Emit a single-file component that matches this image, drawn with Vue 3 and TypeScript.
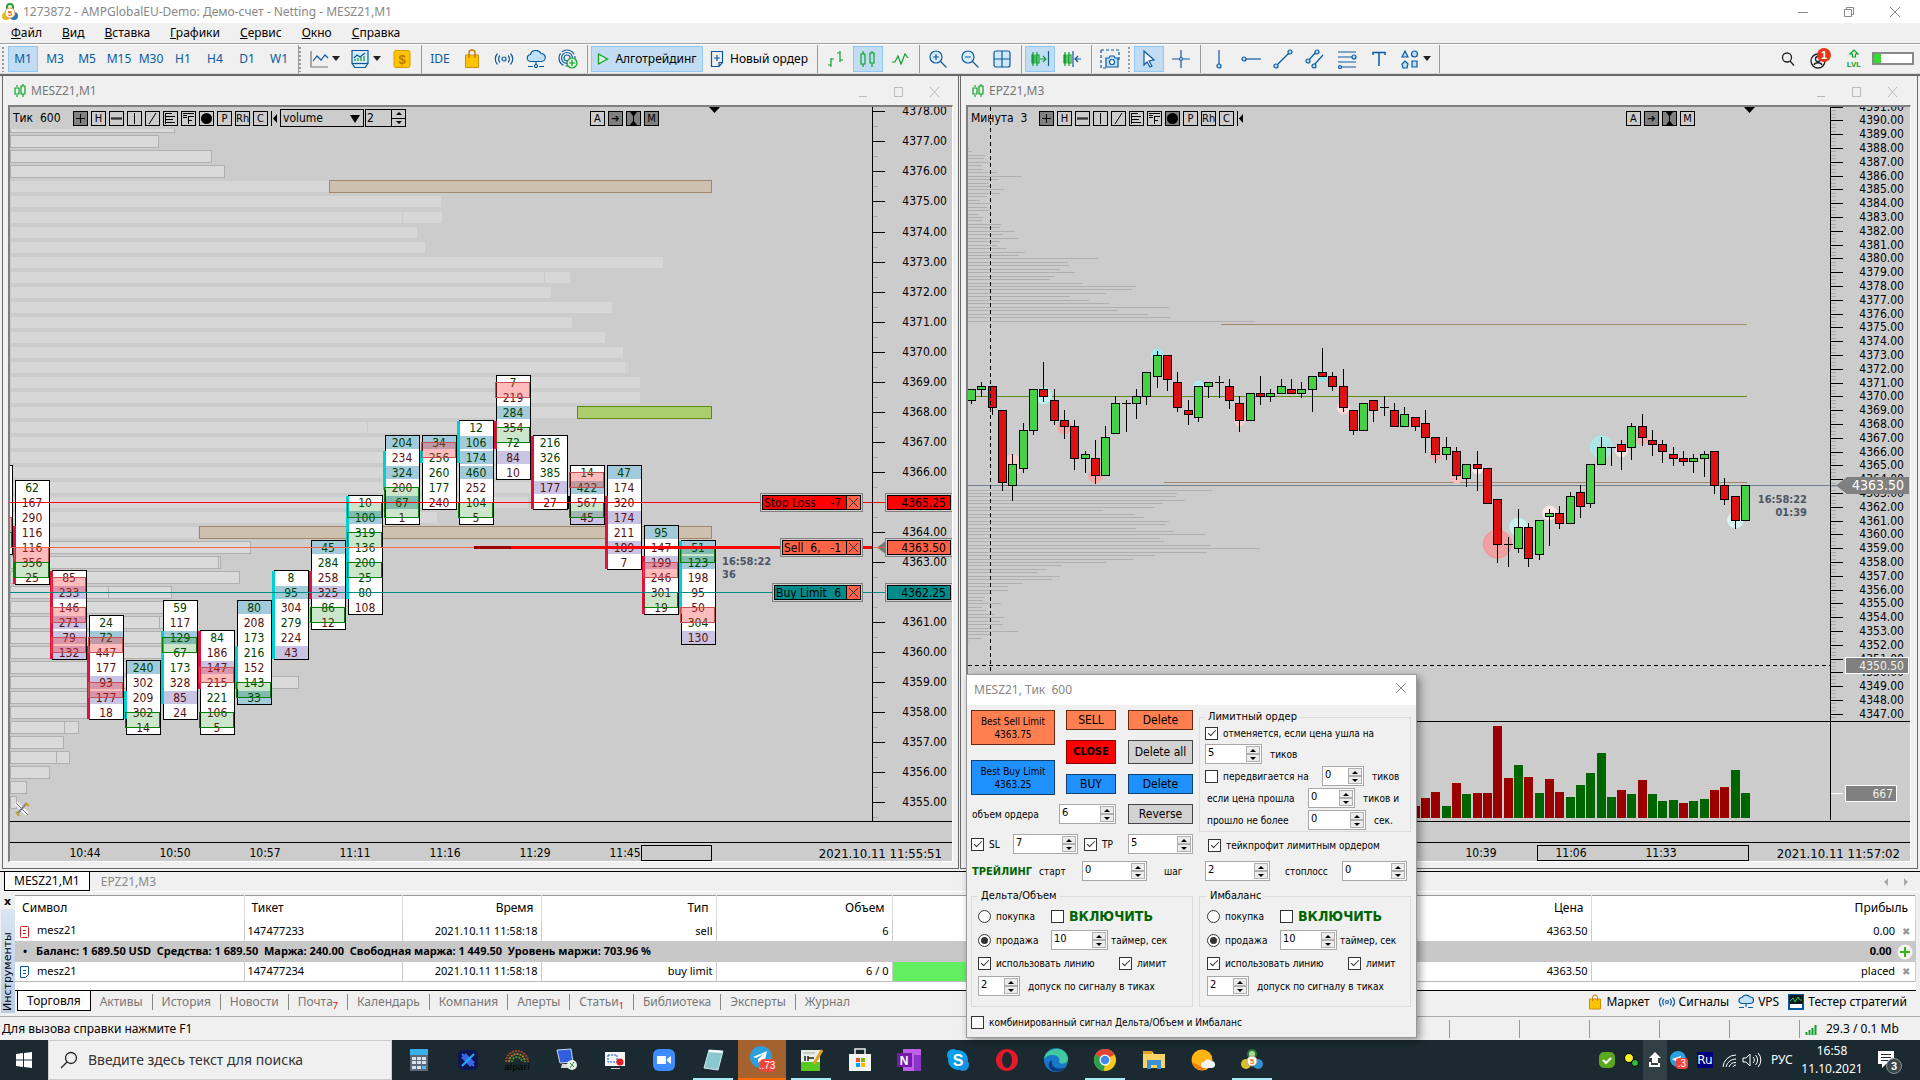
<script setup lang="ts">
import { h, ref } from 'vue'
import type { FunctionalComponent } from 'vue'

/* ---------- shared controls ---------- */
const Spin: FunctionalComponent<{ value: string; label: string }> = (props) =>
  h('span', { class: 'spin' }, [
    h('input', { type: 'text', value: props.value, 'aria-label': props.label }),
    h('span', { class: 'steps' }, [
      h('button', { type: 'button', 'aria-label': 'Больше' }, [h('i', { class: 'up' })]),
      h('button', { type: 'button', 'aria-label': 'Меньше' }, [h('i', { class: 'down' })]),
    ]),
  ])
Spin.props = ['value', 'label']

const menu = [
  ['Ф', 'айл'], ['В', 'ид'], ['В', 'ставка'], ['Г', 'рафики'], ['С', 'ервис'], ['О', 'кно'], ['С', 'правка'],
]
const frames = ['M1', 'M3', 'M5', 'M15', 'M30', 'H1', 'H4', 'D1', 'W1']
const tools = ['plus', 'H', 'minus', 'bar', 'slash', 'profile', 'fixed', 'dot', 'P', 'Rh', 'C', 'cut']
const glyphs: Record<string, string> = {
  plus: 'M6.500 2v9M2 6.500h9',
  minus: 'M1 6h11M1 7h11',
  bar: 'M6.500 1v11',
  slash: 'M3 12L10 1',
  profile: 'M1.500 1v11M1 1.500h7M1 4.500h10M1 7.500h8M1 10.500h10',
  fixed: 'M1 1.500h11M1 3.500h4M1 5.500h4M6.500 4v8M6 4.500h6M6 8.500h4',
}
const mode = ref('volume')

/* ---------- left chart: volume profile and clusters ---------- */
interface Bar { y: number; x2: number; div?: number }
const outlined: Bar[] = [
  { y: 120, x2: 175 }, { y: 135, x2: 159 }, { y: 150, x2: 212 }, { y: 165, x2: 225 },
  { y: 541, x2: 251 }, { y: 556, x2: 221, div: 218 }, { y: 571, x2: 240 }, { y: 586, x2: 172, div: 108 },
  { y: 601, x2: 166 }, { y: 616, x2: 166, div: 159 }, { y: 631, x2: 164 }, { y: 646, x2: 164 },
  { y: 661, x2: 128 }, { y: 676, x2: 299 }, { y: 691, x2: 128 }, { y: 706, x2: 91 },
  { y: 721, x2: 79, div: 64 }, { y: 736, x2: 64 }, { y: 751, x2: 70, div: 56 }, { y: 766, x2: 50 },
  { y: 781, x2: 27 }, { y: 796, x2: 17 },
]
const filled: Bar[] = [
  { y: 181, x2: 329 }, { y: 196, x2: 441 }, { y: 212, x2: 442, div: 402 }, { y: 227, x2: 417 },
  { y: 242, x2: 425 }, { y: 257, x2: 663 }, { y: 272, x2: 570, div: 544 }, { y: 287, x2: 551 },
  { y: 302, x2: 612 }, { y: 317, x2: 572 }, { y: 332, x2: 605 }, { y: 347, x2: 623 },
  { y: 362, x2: 628, div: 626 }, { y: 377, x2: 640 }, { y: 392, x2: 640 }, { y: 407, x2: 577 },
  { y: 422, x2: 496, div: 367 }, { y: 437, x2: 496 }, { y: 452, x2: 496 }, { y: 467, x2: 496 },
  { y: 482, x2: 533 }, { y: 497, x2: 528 }, { y: 512, x2: 437 }, { y: 527, x2: 198 },
]

/* cell: number, then g/r for the digit colour, then B/P for a shaded cell */
interface Cluster {
  x: number
  top: number
  cells: string
  bar?: [string, number, number]
  red?: number[]
  green?: number[]
}
const clusters: Cluster[] = [
  { x: -22, top: 465, cells: 'r r r r r r', red: [3], green: [4] },
  { x: 15, top: 480, cells: '62g 167r 290r 116r 116r 356r 25r', bar: ['sell', 526, 584], red: [4], green: [5] },
  { x: 52, top: 570, cells: '85r 233rP 146r 271rP 79rP 132rP', bar: ['sell', 571, 659], red: [0, 2, 4] },
  { x: 89, top: 615, cells: '24g 72gB 447r 177r 93rP 177rP 18r', bar: ['sell', 646, 719], red: [1, 4] },
  { x: 126, top: 660, cells: '240gB 302r 209r 302r 14r', bar: ['buy', 691, 719], green: [3] },
  { x: 163, top: 600, cells: '59g 117r 129gB 67g 173g 328r 85rP 24r', bar: ['buy', 631, 704], green: [2] },
  { x: 200, top: 630, cells: '84g 186r 147rP 215r 221g 106r 5r', bar: ['sell', 631, 689], red: [2], green: [5] },
  { x: 237, top: 600, cells: '80gB 208r 173g 216g 152r 143g 33gB', bar: ['buy', 646, 689], green: [5] },
  { x: 274, top: 570, cells: '8g 95gB 304r 279g 224r 43rP', bar: ['buy', 571, 659] },
  { x: 311, top: 540, cells: '45gB 284g 258r 325rP 86g 12r', bar: ['sell', 571, 599], green: [4] },
  { x: 348, top: 495, cells: '10g 100gB 319g 136g 200g 25g 80g 108r', bar: ['buy', 496, 599], green: [0, 2, 4] },
  { x: 385, top: 435, cells: '204gB 234r 324gB 200r 67gB 1r', bar: ['buy', 451, 490], green: [3, 4] },
  { x: 422, top: 435, cells: '34gB 256g 260g 177g 240r', bar: ['buy', 451, 463], red: [0] },
  { x: 459, top: 420, cells: '12g 106gB 174gB 460gB 252r 104g 5r', bar: ['buy', 421, 463], green: [5] },
  { x: 496, top: 375, cells: '7g 219r 284gB 354r 72g 84rP 10r', bar: ['sell', 421, 449], red: [0], green: [3] },
  { x: 533, top: 435, cells: '216g 326g 385g 177rP 27r', bar: ['sell', 436, 509] },
  { x: 570, top: 465, cells: '14g 422gB 567r 45rP', bar: ['flat', 496, 509], red: [0], green: [2] },
  { x: 607, top: 465, cells: '47gB 174r 320r 174rP 211r 189rP 7r', bar: ['sell', 496, 569] },
  { x: 644, top: 525, cells: '95gB 147r 199rP 246r 301r 19r', bar: ['sell', 556, 614], red: [2], green: [4] },
  { x: 681, top: 540, cells: '51gB 123gB 198r 95r 50r 304g 130rP', bar: ['buy', 541, 614], red: [4], green: [0] },
]
const parsed = clusters.map((c) => ({
  ...c,
  rows: c.cells.split(' ').map((s) => {
    const m = /^(\d*)([gr])([BP]?)$/.exec(s)!
    return { n: m[1], tone: m[2], bg: m[3] }
  }),
}))

const leftScale = Array.from({ length: 24 }, (_, i) => {
  const p = 4378 - i
  return { p: p.toFixed(2), y: 412 + (4368 - p) * 30 - (p >= 4375 ? 1 : 0) }
})
const leftTimes = ['10:44', '10:50', '10:57', '11:11', '11:16', '11:29', '11:45']

/* ---------- right chart ---------- */
const priceY = (p: number) => 120.4 + (4390 - p) * 13.8
const rightScale = Array.from({ length: 45 }, (_, i) => ({ p: (4391 - i).toFixed(2), y: Math.round(priceY(4391 - i)) }))
const rightMinor = Array.from({ length: 179 }, (_, i) => Math.round(priceY(4391 - i / 4)))

const upperProfile = [
  15, 20, 41, 39, 50, 36, 38, 62, 101, 64, 48, 50, 72, 66, 44, 33, 50, 44, 50, 30, 38, 36, 67, 66, 90, 70, 95, 65, 60,
  76, 106, 96, 225, 176, 178, 163, 188, 154, 147, 200, 287, 281, 238, 180, 211, 243, 341, 258, 307, 343, 481,
].map((w, i) => ({ y: Math.round(priceY(4388 - i / 4)), x2: Math.round(960 + w / 1.633) }))
const lowerProfile = [
  756, 651, 648, 675, 609, 582, 429, 525, 552, 627, 615, 528, 642, 738, 600, 612, 750, 900, 741, 585, 519, 438, 306,
  261, 231, 300, 276, 189, 144, 144, 96, 75, 69, 123, 66, 78, 102, 132, 120, 129, 90, 174, 87, 66, 27,
].map((w, i) => ({ y: Math.round(priceY(4363.25 - i / 4)), x2: Math.round(960 + w / 3) }))
const profile = [...upperProfile, ...lowerProfile]

/* high, body top, body bottom, low, direction */
type Candle = [number, number, number, number, string]
const candles: Candle[] = [
  [389, 389, 400, 403, 'g'], [382, 386, 389, 396, 'g'], [386, 386, 407, 414, 'r'], [410, 410, 482, 490, 'r'],
  [454, 464, 485, 500, 'g'], [423, 430, 468, 472, 'g'], [389, 389, 430, 434, 'g'], [362, 389, 396, 401, 'r'],
  [389, 400, 420, 424, 'r'], [410, 420, 426, 438, 'r'], [420, 426, 458, 469, 'r'], [451, 454, 458, 472, 'g'],
  [440, 458, 475, 483, 'r'], [426, 437, 475, 475, 'g'], [396, 403, 433, 433, 'g'], [400, 403, 403, 431, 'd'],
  [389, 396, 403, 418, 'g'], [372, 372, 396, 404, 'g'], [351, 355, 376, 387, 'g'], [355, 355, 379, 390, 'r'],
  [372, 382, 407, 411, 'r'], [400, 410, 414, 424, 'r'], [386, 386, 417, 421, 'g'], [382, 382, 386, 397, 'g'],
  [376, 382, 382, 397, 'd'], [379, 386, 400, 408, 'r'], [396, 403, 420, 431, 'r'], [393, 393, 420, 420, 'g'],
  [376, 393, 396, 404, 'r'], [389, 393, 396, 401, 'g'], [379, 386, 393, 393, 'g'], [379, 389, 393, 393, 'r'],
  [382, 389, 393, 397, 'g'], [376, 376, 389, 411, 'g'], [348, 372, 376, 376, 'r'], [372, 376, 386, 390, 'r'],
  [369, 386, 407, 411, 'r'], [410, 410, 430, 434, 'r'], [403, 403, 430, 430, 'g'], [400, 400, 410, 421, 'r'],
  [396, 407, 407, 415, 'd'], [403, 410, 426, 426, 'r'], [407, 414, 426, 426, 'g'], [417, 417, 426, 430, 'r'],
  [410, 423, 437, 452, 'r'], [437, 437, 454, 462, 'r'], [437, 447, 454, 459, 'g'], [447, 451, 475, 479, 'r'],
  [464, 464, 478, 486, 'g'], [451, 464, 468, 490, 'r'], [468, 468, 503, 503, 'r'], [499, 499, 544, 562, 'r'],
  [537, 544, 544, 566, 'd'], [509, 527, 548, 552, 'g'], [523, 527, 558, 566, 'r'], [520, 520, 554, 559, 'g'],
  [509, 513, 516, 545, 'g'], [506, 513, 523, 528, 'r'], [492, 496, 523, 523, 'g'], [485, 492, 506, 517, 'r'],
  [464, 464, 503, 507, 'g'], [437, 447, 464, 464, 'g'], [447, 447, 447, 465, 'd'], [440, 444, 451, 469, 'r'],
  [423, 426, 447, 459, 'g'], [414, 426, 437, 445, 'r'], [430, 440, 444, 455, 'r'], [440, 444, 451, 462, 'r'],
  [447, 454, 458, 465, 'r'], [451, 458, 461, 465, 'r'], [454, 458, 461, 472, 'g'], [451, 454, 458, 476, 'g'],
  [451, 451, 485, 493, 'r'], [478, 485, 499, 504, 'r'], [496, 496, 520, 528, 'r'], [485, 485, 520, 520, 'g'],
]
const candleX = (i: number) => Math.round(971 + i * 10.32)

/* centre, radius, fill, rim */
const bubbles: [number, number, number, string, string][] = [
  [1043, 396, 8, '#c8f0f0', '#b4f4f4'], [1012, 465, 10, '#f8cccc', '#f8cccc'], [1064, 427, 7, '#f6a5a5', '#f6a5a5'],
  [1095, 476, 7, '#f8a8a8', '#f8a8a8'], [1157, 355, 6, '#a0e8ec', '#94f8f8'], [1198, 386, 5, '#b4ecee', '#a8f8f8'],
  [1239, 421, 5, '#fbd0d0', '#fbd0d0'], [1322, 376, 5, '#94e0e6', '#90f0f4'], [1343, 408, 6, '#fad8d8', '#fad8d8'],
  [1435, 455, 5, '#f8a8a8', '#f8a8a8'], [1456, 476, 7, '#fac0c0', '#fac0c0'], [1477, 469, 5, '#fdecec', '#fdecec'],
  [1497, 544, 14, '#efa0a0', '#fa8c8c'], [1518, 527, 9, '#cdf0f0', '#b4f4f4'], [1549, 513, 7, '#fbe4e4', '#fbe4e4'],
  [1601, 447, 11, '#b0e4e4', '#98f8f8'], [1621, 451, 6, '#fde8e8', '#fde8e8'], [1642, 438, 6, '#f8b0b0', '#f8b0b0'],
  [1735, 520, 8, '#daf2f2', '#c8f8f8'],
]

const volHeights = [
  12, 20, 26, 12, 35, 24, 25, 25, 92, 40, 53, 41, 25, 39, 26, 21, 33, 45, 65, 21, 28, 24, 38, 24, 17, 18, 15, 17, 19,
  28, 31, 48, 25,
]
const volTones = 'rrrgrgrrrrgrgrrgggggrgrgggrggrrgg'
const volumes = volHeights.map((v, i) => ({ x: candleX(43 + i) - 4, v, tone: volTones[i] }))

/* ---------- toolbox ---------- */
const tabs = [
  ['Торговля', ''], ['Активы', ''], ['История', ''], ['Новости', ''], ['Почта', '7'], ['Календарь', ''],
  ['Компания', ''], ['Алерты', ''], ['Статьи', '1'], ['Библиотека', ''], ['Эксперты', ''], ['Журнал', ''],
]
const signalGroups = [
  { id: 'delta', title: 'Дельта/Объем' },
  { id: 'imb', title: 'Имбаланс' },
]
</script>

<template>
  <div class="app">
    <header class="titlebar">
      <svg class="logo" width="16" height="18" viewBox="0 0 16 18">
        <circle cx="8" cy="4" r="3" fill="#fff" stroke="#2f9a2f" stroke-width="2" />
        <circle cx="4" cy="13" r="4" fill="#e8b820" /><circle cx="12" cy="13" r="4" fill="#2878c0" />
        <circle cx="8" cy="10" r="5" fill="#fff" stroke="#d8a060" />
        <text x="8" y="13" text-anchor="middle" class="coin">5</text>
      </svg>
      <h1>1273872 - AMPGlobalEU-Demo: Демо-счет - Netting - MESZ21,M1</h1>
      <div class="winbtns">
        <button aria-label="Свернуть"><svg width="12" height="12"><path d="M1 6.500h10" class="wl" /></svg></button>
        <button aria-label="Восстановить"><svg width="12" height="12"><path d="M1.500 3.500h7v7h-7zM3.500 3V1.500h7v7H9" class="wl" /></svg></button>
        <button aria-label="Закрыть"><svg width="12" height="12"><path d="M1 1l10 10M11 1L1 11" class="wl" /></svg></button>
      </div>
    </header>

    <nav class="menubar">
      <a v-for="(m, i) in menu" :key="i" href="#"><u>{{ m[0] }}</u>{{ m[1] }}</a>
    </nav>

    <div class="toolbar">
      <i class="grip"></i>
      <button v-for="f in frames" :key="f" class="tb" :class="{ on: f === 'M1' }">{{ f }}</button>
      <i class="sep"></i><i class="grip"></i>
      <button class="tb drop" aria-label="Линия">
        <svg width="20" height="20" class="b"><path d="M2 2v16h17" class="gr" /><path d="M4 12l4-5 4 4 4-5 3 3" /></svg><i class="caret"></i>
      </button>
      <button class="tb drop" aria-label="Шаблон">
        <svg width="20" height="20" class="b"><path d="M2 1.500h16v13l-3 4H5l-3-4z" fill="#d8ecfa" /><path d="M4 9l3-3 3 2 5-4" /><path d="M5 12v-2M8 12V9M11 12V8M14 12V7" stroke="#12a02a" /><path d="M2 14.500h16" /></svg><i class="caret"></i>
      </button>
      <button class="tb" aria-label="Счет">
        <svg width="18" height="20"><rect x="1" y="1.500" width="16" height="17" rx="2" fill="#ffc400" stroke="#d89b00" /><text x="9" y="15" text-anchor="middle" class="dollar">$</text></svg>
      </button>
      <i class="sep"></i>
      <button class="tb">IDE</button>
      <button class="tb" aria-label="Маркет">
        <svg width="16" height="20"><path d="M1.500 6h13v12.500h-13z" fill="#ffc400" stroke="#c89010" /><path d="M5 9V4a3 3 0 0 1 6 0v5" fill="none" stroke="#c07a00" stroke-width="1.400" /></svg>
      </button>
      <button class="tb" aria-label="Сигналы">
        <svg width="20" height="16" class="b"><circle cx="10" cy="8" r="2" /><path d="M6 4.500a5 5 0 0 0 0 7M14 4.500a5 5 0 0 1 0 7M3.500 2.500a8 8 0 0 0 0 11M16.500 2.500a8 8 0 0 1 0 11" /></svg>
      </button>
      <button class="tb" aria-label="VPS">
        <svg width="20" height="18" class="b"><path d="M5 11.500a3.500 3.500 0 0 1-.5-7 5.500 5 0 0 1 10.500-1 4 4 0 0 1 .5 8z" fill="#bfe2f8" /><path d="M10 12v3M2 16.500h5M13 16.500h5" /><circle cx="10" cy="16" r="1.500" /></svg>
      </button>
      <button class="tb" aria-label="Сообщество">
        <svg width="20" height="20" class="b"><circle cx="9" cy="9" r="8" stroke-dasharray="14 2" /><circle cx="9" cy="9" r="5.500" /><circle cx="9" cy="9" r="3" /><circle cx="14" cy="14" r="5" fill="#d8f5d8" stroke="#12a02a" /><path d="M14 11v6M11 14h6" stroke="#12a02a" /></svg>
      </button>
      <i class="sep"></i>
      <button class="tb wide on"><svg width="12" height="14"><path d="M1.500 2l9 5-9 5z" fill="#d9f5dc" stroke="#0da326" stroke-width="1.300" /></svg>Алготрейдинг</button>
      <button class="tb wide"><svg width="14" height="18" class="b"><path d="M1.500 1.500h11v11l-3.500 4H1.500zM12 12.500H9V16" /><path d="M7 5v6M4 8h6" /></svg>Новый ордер</button>
      <i class="sep"></i>
      <button class="tb" aria-label="Бары"><svg width="20" height="20" class="g"><path d="M5 9v9M2 16h3M5 10h3M14 2v11M11 4h3M14 11h3" /></svg></button>
      <button class="tb on" aria-label="Свечи"><svg width="20" height="20" class="g"><path d="M5 2v3M5 15v3M3 5h4v10H3zM14 2v2M14 14v4M12 4h4v10h-4z" /></svg></button>
      <button class="tb" aria-label="Линия"><svg width="20" height="20" class="g"><path d="M2 13h3l3-6 3 8 4-10 3 4" /></svg></button>
      <i class="sep"></i>
      <button class="tb" aria-label="Крупнее"><svg width="20" height="20" class="b"><circle cx="8" cy="8" r="6" fill="#d8ecfa" /><path d="M8 5v6M5 8h6M12.500 12.500l6 6" /></svg></button>
      <button class="tb" aria-label="Мельче"><svg width="20" height="20" class="b"><circle cx="8" cy="8" r="6" fill="#d8ecfa" /><path d="M5 8h6M12.500 12.500l6 6" /></svg></button>
      <button class="tb" aria-label="Окна"><svg width="20" height="20" class="b"><rect x="2" y="2" width="16" height="16" rx="2" fill="#cfe8fa" /><path d="M10 2v16M2 10h16" /></svg></button>
      <i class="sep"></i>
      <button class="tb on" aria-label="Автопрокрутка"><svg width="20" height="20" class="g"><path d="M3 3v14M7 3v14M2 6h2v8H2zM6 6h3v8H6zM10 10h6M13 7l3 3-3 3" /><path d="M18.500 2v15" stroke="#0a5a8a" /></svg></button>
      <button class="tb" aria-label="Сдвиг"><svg width="20" height="20" class="g"><path d="M3 3v14M7 3v14M2 6h2v8H2zM6 6h3v8H6z" /><path d="M11 2v16M19 10h-6M16 7l-3 3 3 3" stroke="#0a5aa0" /></svg></button>
      <i class="sep"></i>
      <button class="tb" aria-label="Снимок"><svg width="20" height="20" class="b"><path d="M1 1h18v10M1 1v18h5" stroke-dasharray="3 2" /><path d="M6 9h3l1-2h4l1 2h3v9H6z" fill="#bfe0f8" /><circle cx="12" cy="13" r="2.500" fill="#fff" /></svg></button>
      <i class="grip"></i>
      <button class="tb on" aria-label="Курсор"><svg width="20" height="20" class="b"><path d="M5 2l10 9-5 1 3 5-2 1-3-5-3 3z" fill="#fff" /></svg></button>
      <button class="tb" aria-label="Перекрестие"><svg width="20" height="20" class="b"><path d="M10 1v7M10 12v7M1 10h7M12 10h7" /><circle cx="10" cy="10" r="1.500" /></svg></button>
      <i class="sep"></i>
      <button class="tb" aria-label="Вертикаль"><svg width="20" height="20" class="b"><path d="M10 1v14" /><circle cx="10" cy="17" r="2" fill="#bfe0f8" /></svg></button>
      <button class="tb" aria-label="Горизонталь"><svg width="20" height="20" class="b"><path d="M5 10h15" /><circle cx="3" cy="10" r="2" fill="#bfe0f8" /></svg></button>
      <button class="tb" aria-label="Тренд"><svg width="20" height="20" class="b"><path d="M4 16L16 4" /><circle cx="3" cy="17" r="2" fill="#bfe0f8" /><circle cx="17" cy="3" r="2" fill="#bfe0f8" /></svg></button>
      <button class="tb" aria-label="Канал"><svg width="20" height="20" class="b"><path d="M3 12L11 3M9 16L18 6" /><circle cx="3" cy="12" r="2" fill="#bfe0f8" /><circle cx="12" cy="3" r="2" fill="#bfe0f8" /><circle cx="9" cy="17" r="2" fill="#bfe0f8" /></svg></button>
      <button class="tb" aria-label="Фибоначчи"><svg width="20" height="20" class="b"><path d="M1 3h18M1 8h15M1 13h18M5 18h14" /><circle cx="17" cy="8" r="2" fill="#bfe0f8" /><circle cx="3" cy="18" r="1.500" fill="#bfe0f8" /></svg></button>
      <button class="tb" aria-label="Текст"><svg width="16" height="18" class="b"><path d="M2 5V2.500h12V5M8 3v13" stroke-width="1.500" /></svg></button>
      <button class="tb drop" aria-label="Фигуры"><svg width="20" height="20" class="b"><path d="M5 2l3 6H2zM5 12l3 3-1 4H3l-1-4zM12 12h5v6h-5z" fill="#bfe0f8" /><circle cx="14.500" cy="5" r="3" fill="#bfe0f8" /></svg><i class="caret"></i></button>
      <i class="sep"></i>
      <div class="tbright">
        <svg width="16" height="16"><circle cx="7" cy="6.500" r="4.500" class="k" /><path d="M10 10l4 4.500" class="k" /></svg>
        <svg width="22" height="24" viewBox="0 0 22 24"><circle cx="8" cy="14" r="7" class="k" /><circle cx="8" cy="12" r="2.500" class="k" /><path d="M4 18c1-3 7-3 8 0" class="k" /><circle cx="14" cy="8" r="7" fill="#e0381c" /><text x="14" y="12" text-anchor="middle" class="badge">1</text></svg>
        <svg width="16" height="20" class="g"><path d="M8 1L4 5h2.500v3h3V5H12z" /><text x="8" y="18" text-anchor="middle" class="lvl">LVL</text></svg>
        <span class="meter"><i></i></span>
      </div>
    </div>

    <main class="mdi">
      <!-- left chart -->
      <section class="win first">
        <div class="wintitle">
          <svg width="14" height="14" class="g"><path d="M4 1v2M4 11v2M2 4h4v6H2zM10 0v2M10 10v3M8 2h4v8H8z" /></svg>
          <h2>MESZ21,M1</h2>
          <span class="cbtns">
            <button aria-label="Свернуть"><svg width="12" height="12"><path d="M2 10.500h8" class="cl" /></svg></button>
            <button aria-label="Развернуть"><svg width="12" height="12"><path d="M1.500 1.500h8v9h-8z" class="cl" /></svg></button>
            <button aria-label="Закрыть"><svg width="12" height="12"><path d="M1 1l9 10M10 1L1 11" class="cl" /></svg></button>
          </span>
        </div>
        <div class="chart">
          <div class="pane">
            <svg class="plot" aria-label="MESZ21">
              <g transform="translate(-10,-107)">
                <template v-for="b in outlined" :key="'o' + b.y">
                  <rect x="10.500" :y="b.y + 0.5" :width="b.x2 - 11" height="12" class="hb" />
                  <path v-if="b.div" :d="`M${b.div + 0.5} ${b.y + 1}v11`" class="hbd" />
                </template>
                <template v-for="b in filled" :key="'f' + b.y">
                  <rect x="11" :y="b.y" :width="b.x2 - 11" height="11" fill="#d7d7d7" />
                  <path v-if="b.div" :d="`M${b.div + 0.5} ${b.y}v11`" stroke="#cbcbcb" />
                </template>
                <rect x="10" y="107" width="400" height="22" fill="#ccc" />
                <rect x="329.500" y="180.500" width="382" height="12" class="tan" />
                <rect x="199.500" y="526.500" width="512" height="12" class="tan" />
                <rect x="577.500" y="406.500" width="134" height="12" fill="#adce6c" stroke="#5a8c14" />
                <g v-for="c in parsed" :key="c.x">
                  <rect :x="c.x + 0.5" :y="c.top + 0.5" width="34" :height="c.rows.length * 15 - 1" fill="#fff" stroke="#000" />
                  <rect v-for="(r, i) in c.rows" v-show="r.bg" :key="i" :x="c.x + 1" :y="c.top + 1 + i * 15" width="33" height="13" :fill="r.bg === 'B' ? '#a2cadb' : '#c9c4e4'" />
                  <rect v-if="c.bar" :x="c.x - 2" :y="c.bar[1]" width="3" :height="c.bar[2] - c.bar[1]" :class="'side-' + c.bar[0]" />
                  <text v-for="(r, i) in c.rows" :key="'t' + i" :x="c.x + 17" :y="c.top + 12 + i * 15" text-anchor="middle" :class="'n-' + r.tone">{{ r.n }}</text>
                  <rect v-for="i in c.red" :key="'r' + i" :x="c.x - 0.5" :y="c.top + 7.5 + i * 15" width="34" height="15" class="imb-r" />
                  <rect v-for="i in c.green" :key="'g' + i" :x="c.x - 0.5" :y="c.top + 7.5 + i * 15" width="34" height="15" class="imb-g" />
                </g>
                <path d="M10 502.500H900" stroke="#f00" />
                <path d="M10 547.500H900" stroke="#ff6347" />
                <path d="M511 547.500H872" stroke="#f00" stroke-width="3" />
                <path d="M474 547.500h37" stroke="#a00000" stroke-width="3" />
                <path d="M10 592.500H900" stroke="#008b8b" />
                <path d="M709 107h11l-5.500 6z" />
                <text x="722" y="565" class="clock">16:58:22</text>
                <text x="722" y="578" class="clock">36</text>
                <g class="order">
                  <rect x="760.500" y="493.500" width="102" height="18" class="rim" /><rect x="762.500" y="495.500" width="98" height="14" fill="#f00" /><rect x="846.500" y="495.500" width="14" height="14" fill="#ff6347" /><path d="M849 498l9 9M858 498l-9 9" stroke="#333" /><text x="764" y="507">Stop Loss</text><text x="841" y="507" text-anchor="end">-7</text>
                  <rect x="780.500" y="538.500" width="82" height="18" class="rim" /><rect x="782.500" y="540.500" width="78" height="14" fill="#ff6347" /><rect x="846.500" y="540.500" width="14" height="14" fill="#ff6347" /><path d="M849 543l9 9M858 543l-9 9" stroke="#333" /><text x="784" y="552">Sell&nbsp; 6,</text><text x="841" y="552" text-anchor="end">-1</text>
                  <rect x="772.500" y="583.500" width="90" height="18" class="rim" /><rect x="774.500" y="585.500" width="86" height="14" fill="#008b8b" /><rect x="846.500" y="585.500" width="14" height="14" fill="#ff6347" /><path d="M849 588l9 9M858 588l-9 9" stroke="#333" /><text x="776" y="597">Buy Limit</text><text x="841" y="597" text-anchor="end">6</text>
                </g>
                <g transform="translate(14,801)" fill="none" stroke-width="2"><path d="M2 2l11 11" stroke="#f8f8f8" stroke-width="4" /><path d="M2 2l12 12" stroke="#666" stroke-width="1" /><path d="M13 2L3 13" stroke="#888" /><path d="M11 2l4 3M2 11l3 4" stroke="#c8a020" /></g>
              </g>
            </svg>
            <svg class="axis" width="80">
              <g transform="translate(-872,-107)">
                <path d="M872.500 107v715" stroke="#000" />
                <template v-for="s in leftScale" :key="s.p">
                  <path :d="`M873 ${s.y + 0.5}h12`" stroke="#000" /><path :d="`M873 ${s.y + 15.5}h5`" stroke="#aaa" />
                  <text v-if="s.p !== '4365.00' && s.p !== '4362.00'" x="947" :y="s.y + 4" text-anchor="end">{{ s.p }}</text>
                </template>
                <path d="M873 502.500h12" stroke="#f00" /><path d="M873 592.500h12" stroke="#008b8b" />
                <path d="M877 547.500l8-6v12z" fill="#777" /><path d="M873 547.500h12" stroke="#ff6347" />
                <g class="order">
                  <rect x="885.500" y="493.500" width="68" height="18" class="rim" /><rect x="887.500" y="495.500" width="63" height="14" fill="#f00" /><text x="946" y="507" text-anchor="end">4365.25</text>
                  <rect x="885.500" y="538.500" width="68" height="18" class="rim" /><rect x="887.500" y="540.500" width="63" height="14" fill="#ff6347" /><text x="946" y="552" text-anchor="end">4363.50</text>
                  <rect x="885.500" y="583.500" width="68" height="18" class="rim" /><rect x="887.500" y="585.500" width="63" height="14" fill="#008b8b" /><text x="946" y="597" text-anchor="end">4362.25</text>
                </g>
              </g>
            </svg>
            <div class="ctools">
              <span class="period p1">Тик&nbsp; 600</span>
              <button v-for="t in tools" :key="t" :class="{ dark: t === 'plus', cut: t === 'cut' }" :aria-label="t">
                <svg v-if="glyphs[t]" width="13" height="13"><path :d="glyphs[t]" class="tg" /></svg>
                <svg v-else-if="t === 'dot'" width="13" height="13"><circle cx="6.500" cy="6.500" r="5.500" /></svg>
                <svg v-else-if="t === 'cut'" width="5" height="13"><path d="M5 2L1 6.500 5 11z" /></svg>
                <template v-else>{{ t }}</template>
              </button>
              <span class="sel"><select v-model="mode" aria-label="Тип"><option>volume</option></select></span>
              <Spin class="cspin" value="2" label="Порог" />
            </div>
            <div class="ctools r1">
              <button>A</button><button class="dark">➔</button><button class="dark"><svg width="13" height="13"><path d="M3 0h7L7 4v5l3 4H3l3-4V4z" /></svg></button><button class="dark">M</button>
            </div>
          </div>
          <div class="strip"></div>
          <div class="times">
            <ol class="t1"><li v-for="t in leftTimes" :key="t">{{ t }}</li></ol>
            <i class="range rg1"></i>
            <time>2021.10.11 11:55:51</time>
          </div>
        </div>
      </section>

      <!-- right chart -->
      <section class="win second">
        <div class="wintitle">
          <svg width="14" height="14" class="g"><path d="M4 1v2M4 11v2M2 4h4v6H2zM10 0v2M10 10v3M8 2h4v8H8z" /></svg>
          <h2>EPZ21,M3</h2>
          <span class="cbtns">
            <button aria-label="Свернуть"><svg width="12" height="12"><path d="M2 10.500h8" class="cl" /></svg></button>
            <button aria-label="Развернуть"><svg width="12" height="12"><path d="M1.500 1.500h8v9h-8z" class="cl" /></svg></button>
            <button aria-label="Закрыть"><svg width="12" height="12"><path d="M1 1l9 10M10 1L1 11" class="cl" /></svg></button>
          </span>
        </div>
        <div class="chart">
          <div class="pane">
            <svg class="plot" aria-label="EPZ21">
              <g transform="translate(-968,-107)">
                <path v-for="(p, i) in profile" :key="i" :d="`M968 ${p.y + 0.5}H${p.x2}`" stroke="#b0b0b0" />
                <path d="M1221 324.500H1747" stroke="#a08868" /><path d="M1164 482.500H1747" stroke="#a08868" />
                <path d="M968 396.500H1747" stroke="#5a8c14" /><path d="M968 485.500H1900" stroke="#708090" />
                <circle v-for="(b, i) in bubbles" :key="'b' + i" :cx="b[0] + 0.5" :cy="b[1]" :r="b[2]" :fill="b[3]" :stroke="b[4]" />
                <g v-for="(c, i) in candles" :key="'c' + i">
                  <path :d="`M${candleX(i) + 0.5} ${c[0]}V${c[3] + 1}`" stroke="#000" />
                  <path v-if="c[4] === 'd'" :d="`M${candleX(i) - 4} ${c[1] + 0.5}h9`" stroke="#000" />
                  <rect v-else :x="candleX(i) - 3.5" :y="c[1] + 0.5" width="8" :height="c[2] - c[1]" :fill="c[4] === 'g' ? '#46d246' : '#dc1212'" stroke="#000" />
                </g>
                <path d="M990.500 107V740" stroke="#000" stroke-dasharray="4 3" /><path d="M968 665.500H1900" stroke="#000" stroke-dasharray="4 3" />
                <path d="M1744 107h11l-5.500 6z" />
                <text x="1807" y="503" text-anchor="end" class="clock">16:58:22</text>
                <text x="1807" y="516" text-anchor="end" class="clock">01:39</text>
              </g>
            </svg>
            <svg class="axis" width="80">
              <g transform="translate(-1830,-107)">
                <path v-for="(y, i) in rightMinor" :key="i" :d="`M1831 ${y + 0.5}h5`" stroke="#aaa" />
                <path d="M1830.500 107v715" stroke="#000" />
                <template v-for="s in rightScale" :key="s.p">
                  <path :d="`M1831 ${s.y + 0.5}h12`" stroke="#000" />
                  <text x="1904" :y="s.y + 4" text-anchor="end">{{ s.p }}</text>
                </template>
                <path d="M1831 485.500h8" stroke="#708090" />
                <path d="M1836 485.500l11-8.500h62v17h-62z" fill="#808080" /><text x="1904" y="490" text-anchor="end" class="now">4363.50</text>
                <rect x="1845.500" y="657.500" width="63" height="16" fill="#808080" stroke="#fff" /><text x="1904" y="670" text-anchor="end" class="cross">4350.50</text>
              </g>
            </svg>
            <div class="ctools">
              <span class="period p2">Минута&nbsp; 3</span>
              <button v-for="t in tools" :key="t" :class="{ dark: t === 'plus' || t === 'dot', cut: t === 'cut' }" :aria-label="t">
                <svg v-if="glyphs[t]" width="13" height="13"><path :d="glyphs[t]" class="tg" /></svg>
                <svg v-else-if="t === 'dot'" width="13" height="13"><circle cx="6.500" cy="6.500" r="5.500" /></svg>
                <svg v-else-if="t === 'cut'" width="5" height="13"><path d="M5 2L1 6.500 5 11z" /></svg>
                <template v-else>{{ t }}</template>
              </button>
            </div>
            <div class="ctools r2">
              <button>A</button><button class="dark">➔</button><button class="dark"><svg width="13" height="13"><path d="M3 0h7L7 4v5l3 4H3l3-4V4z" /></svg></button><button>M</button>
            </div>
          </div>
          <div class="vol">
            <svg class="plot"><rect v-for="(v, i) in volumes" :key="i" :x="v.x - 968" :y="96 - v.v" width="9" :height="v.v" :fill="v.tone === 'g' ? '#006400' : '#9b0000'" /></svg>
            <svg class="axis" width="80"><path d="M.5 0v98" stroke="#000" /><path d="M1 71.500h12" stroke="#fff" /><rect x="15.500" y="63.500" width="51" height="16" fill="#808080" stroke="#fff" /><text x="63" y="76" text-anchor="end" class="cross">667</text></svg>
          </div>
          <div class="strip"></div>
          <div class="times">
            <ol class="t2"><li>10:39</li><li>11:06</li><li>11:33</li></ol>
            <i class="range rg2"></i>
            <time>2021.10.11 11:57:02</time>
          </div>
        </div>
      </section>
    </main>

    <div class="charttabs">
      <button class="on">MESZ21,M1</button><button>EPZ21,M3</button>
      <span class="arrows"><i></i><i class="nx"></i></span>
    </div>

    <section class="toolbox">
      <div class="side"><button aria-label="Закрыть">x</button><span>Инструменты</span></div>
      <div class="tbx">
        <table>
          <colgroup><col class="k1" /><col class="k2" /><col class="k3" /><col class="k4" /><col class="k5" /><col class="k6" /><col class="k7" /><col /></colgroup>
          <thead>
            <tr><th>Символ</th><th>Тикет</th><th class="r">Время</th><th class="r">Тип</th><th class="r">Объем</th><th></th><th class="r">Цена</th><th class="r">Прибыль</th></tr>
          </thead>
          <tbody>
            <tr>
              <td><svg width="12" height="14"><rect x="1.500" y="1.500" width="8" height="11" rx="1" class="doc red" /><path d="M4 5.500h3M4 8.500h3" class="doc red" /></svg>mesz21</td>
              <td>147477233</td><td class="r">2021.10.11 11:58:18</td><td class="r">sell</td><td class="r">6</td><td></td><td class="r">4363.50</td><td class="r">0.00 <button class="x" aria-label="Закрыть">✖</button></td>
            </tr>
            <tr class="bal">
              <td colspan="7"><span class="dotm">•</span> Баланс: 1 689.50 USD&nbsp; Средства: 1 689.50&nbsp; Маржа: 240.00&nbsp; Свободная маржа: 1 449.50&nbsp; Уровень маржи: 703.96 %</td>
              <td class="r">0.00 <svg width="16" height="16"><circle cx="8" cy="8" r="7.500" fill="#f4f4f4" /><path d="M8 3v10M3 8h10" stroke="#3cb414" stroke-width="2" /></svg></td>
            </tr>
            <tr>
              <td><svg width="12" height="14"><path d="M1.500 1.500h8v8l-3 3h-5z" class="doc blu" /><path d="M4 5.500h3M4 8.500h3" class="doc blu" /></svg>mesz21</td>
              <td>147477234</td><td class="r">2021.10.11 11:58:18</td><td class="r">buy limit</td><td class="r">6 / 0</td><td class="lime"></td><td class="r">4363.50</td><td class="r">placed <button class="x" aria-label="Удалить">✖</button></td>
            </tr>
          </tbody>
        </table>
        <div class="tabs">
          <button v-for="(t, i) in tabs" :key="t[0]" :class="{ on: i === 0 }">{{ t[0] }}<sub v-if="t[1]">{{ t[1] }}</sub></button>
          <div class="links">
            <a href="#"><svg width="14" height="16"><path d="M1.500 5h11v10h-11z" fill="#ffc400" stroke="#c89010" /><path d="M4.500 7V3.500a2.500 2.500 0 0 1 5 0V7" fill="none" stroke="#c07a00" /></svg>Маркет</a>
            <a href="#"><svg width="16" height="12" class="b"><circle cx="8" cy="6" r="1.500" /><path d="M5 3a4 4 0 0 0 0 6M11 3a4 4 0 0 1 0 6M2.500 1.500a6 6 0 0 0 0 9M13.500 1.500a6 6 0 0 1 0 9" /></svg>Сигналы</a>
            <a href="#"><svg width="16" height="16" class="b"><path d="M4 9.500a3 3 0 0 1 0-6 4.500 4 0 0 1 8-.5 3 3 0 0 1 .5 6.500z" fill="#bfe2f8" /><path d="M8 10v3M1 13.500h5M10 13.500h5" /></svg>VPS</a>
            <a href="#"><svg width="16" height="16"><rect x="1" y="1" width="14" height="14" fill="#fff" stroke="#005aa0" stroke-width="2" /><rect x="1" y="1" width="14" height="9" fill="#0a1a20" /><path d="M2 7l3-3 2 4 3-5 2 3h2" fill="none" stroke="#20d040" /></svg>Тестер стратегий</a>
          </div>
        </div>
      </div>
    </section>

    <footer class="status">
      <span class="help">Для вызова справки нажмите F1</span>
      <i class="c1"></i><i class="c1"></i><i class="c1"></i><i class="c1"></i><i class="c1"></i>
      <span class="net"><svg width="14" height="12"><path d="M1.500 12V9M4.500 12V7M7.500 12V5M10.500 12V2" stroke="#12a02a" stroke-width="2" /></svg>29.3 / 0.1 Mb</span>
    </footer>

    <!-- order panel -->
    <form class="dialog" @submit.prevent>
      <div class="dtitle"><span>MESZ21, Тик&nbsp; 600</span><button type="button" aria-label="Закрыть"><svg width="12" height="12"><path d="M1 1l10 10M11 1L1 11" class="wl" /></svg></button></div>
      <div class="dbody">
        <div class="dtop">
          <div class="dleft">
            <div class="btnzone">
              <div class="two">
                <div class="pair">
                  <div class="colA"><button type="button" class="o big">Best Sell Limit<br />4363.75</button><button type="button" class="bl big">Best Buy Limit<br />4363.25</button></div>
                  <div class="colB"><button type="button" class="o">SELL</button><button type="button" class="close">CLOSE</button><button type="button" class="bl">BUY</button></div>
                </div>
                <div class="volrow"><span>объем ордера</span><Spin class="w57" value="6" label="объем ордера" /></div>
              </div>
              <div class="colB colC"><button type="button" class="o">Delete</button><button type="button" class="tall">Delete all</button><button type="button" class="bl">Delete</button><button type="button">Reverse</button></div>
            </div>
            <div class="line sl">
              <label class="l42"><input type="checkbox" checked />SL</label><Spin class="w65" value="7" label="SL" />
              <label class="l44"><input type="checkbox" checked />TP</label><Spin class="w65" value="5" label="TP" />
            </div>
          </div>
          <div class="dright">
            <fieldset class="limit">
              <legend>Лимитный ордер</legend>
              <label class="h13"><input type="checkbox" checked />отменяется, если цена ушла на</label>
              <div class="line a"><Spin class="w57" value="5" label="тиков" /><span class="ml8">тиков</span></div>
              <div class="line b2"><label class="l117"><input type="checkbox" />передвигается на</label><Spin class="w42" value="0" label="передвигается на" /><span class="ml8">тиков</span></div>
              <div class="line b2"><span class="l103">если цена прошла</span><Spin class="w47" value="0" label="если цена прошла" /><span class="ml8">тиков и</span></div>
              <div class="line b2"><span class="l103">прошло не более</span><Spin class="w58" value="0" label="прошло не более" /><span class="ml8">сек.</span></div>
            </fieldset>
            <label class="h13 tp"><input type="checkbox" checked />тейкпрофит лимитным ордером</label>
          </div>
        </div>
        <div class="line trail">
          <b>ТРЕЙЛИНГ</b><span class="l43">старт</span><Spin class="w65" value="0" label="старт" /><span class="l58">шаг</span><Spin class="w65" value="2" label="шаг" /><span class="l72">стоплосс</span><Spin class="w65" value="0" label="стоплосс" />
        </div>
        <div class="dgroups">
          <fieldset v-for="g in signalGroups" :key="g.id" :class="g.id">
            <legend>{{ g.title }}</legend>
            <div class="line s1"><label class="l73"><input type="radio" :name="g.id" />покупка</label><label class="enable"><input type="checkbox" />ВКЛЮЧИТЬ</label></div>
            <div class="line s2"><label class="l73"><input type="radio" :name="g.id" checked />продажа</label><Spin class="w57" value="10" label="таймер" /><span class="ml3">таймер, сек</span></div>
            <div class="line s3"><label class="l141"><input type="checkbox" checked />использовать линию</label><label><input type="checkbox" checked />лимит</label></div>
            <div class="line s4"><Spin class="w42" value="2" label="допуск" /><span class="ml8">допуск по сигналу в тиках</span></div>
          </fieldset>
        </div>
        <label class="h13 combo"><input type="checkbox" />комбинированный сигнал Дельта/Объем и Имбаланс</label>
      </div>
    </form>

    <footer class="taskbar">
      <button class="start" aria-label="Пуск"><svg width="16" height="16"><path d="M0 2l7-1v6.500H0zM8 1l8-1v7.500H8zM0 8.500h7V15l-7-1zM8 8.500h8V16l-8-1z" fill="#fff" /></svg></button>
      <label class="search"><svg width="18" height="18"><circle cx="11" cy="7" r="5.500" class="k" /><path d="M7 11l-6 6" class="k" /></svg><input type="text" placeholder="Введите здесь текст для поиска" /></label>
      <div class="apps">
        <button aria-label="Калькулятор"><svg width="24" height="24"><rect x="3" y="1" width="18" height="22" fill="#5a6a78" /><rect x="3" y="1" width="18" height="6" fill="#38b0e8" /><path d="M5 9h4v3H5zM10 9h4v3h-4zM15 9h4v3h-4zM5 13h4v3H5zM10 13h4v3h-4zM15 13h4v3h-4zM5 18h4v3H5zM10 18h4v3h-4z" fill="#d8e0e8" /><path d="M15 18h4v3h-4z" fill="#58b8f0" /></svg></button>
        <button aria-label="X"><svg width="24" height="24"><rect x="2" y="2" width="20" height="20" rx="5" fill="#101450" /><path d="M6 6l12 12M9 6l9 9M6 9l9 9" stroke="#3a6af0" stroke-width="2" /><path d="M18 6L6 18" stroke="#20b0f0" stroke-width="2" /></svg></button>
        <button aria-label="alpari"><svg width="26" height="24" fill="none"><path d="M2 14a11 11 0 0 1 22 0" stroke="#a84828" stroke-width="2" stroke-dasharray="2 1" /><path d="M5 14a8 8 0 0 1 16 0" stroke="#a88828" stroke-width="2" stroke-dasharray="2 1" /><path d="M8 14a5 5 0 0 1 10 0" stroke="#409030" stroke-width="2" stroke-dasharray="2 1" /><text x="13" y="22" text-anchor="middle" class="alp">alpari</text></svg></button>
        <button aria-label="RDP"><svg width="24" height="24"><path d="M3 2l14-1 2 13-13 1z" fill="#3060e0" stroke="#c8d8f0" /><path d="M8 16h9l1 4H7z" fill="#d8d8d8" /><circle cx="18" cy="17" r="5" fill="#e8f0e8" /><path d="M16 15l2 2-2 3M20 14l-2 3 2 2" stroke="#30a040" fill="none" /></svg></button>
        <button aria-label="Запись"><svg width="24" height="24"><rect x="2" y="4" width="20" height="14" fill="#f4f4f4" /><path d="M5 7h9v7H5z" fill="none" stroke="#2050c0" stroke-dasharray="2 1" /><circle cx="17" cy="14" r="3.500" fill="#e02020" /><path d="M8 20h9v1H8z" fill="#ccc" /></svg></button>
        <button aria-label="Zoom"><svg width="24" height="24"><rect x="1" y="1" width="22" height="22" rx="6" fill="#3f8cff" /><path d="M5 8h9v8H5zM15 11l4-3v8l-4-3z" fill="#fff" /></svg></button>
        <button class="run" aria-label="Блокнот"><svg width="24" height="24"><path d="M8 2l14 1-5 19-14-2z" fill="#8ac8d0" stroke="#d8e8ec" /><path d="M8 3l13 1" stroke="#fff" stroke-width="2" /></svg></button>
        <button class="hot" aria-label="Telegram"><svg width="28" height="28"><circle cx="13" cy="12" r="11" fill="#2ba0dc" /><path d="M5 12l14-6-3 13-4-3-2 2v-4l6-5-8 4z" fill="#fff" /><rect x="12" y="14" width="15" height="13" rx="4" fill="#f04438" /><text x="19" y="24" text-anchor="middle" class="tb73">..73</text></svg></button>
        <button class="run" aria-label="Notepad++"><svg width="24" height="24"><path d="M2 2h19v21H2z" fill="#e8f0e8" /><path d="M2 14h19v9H2z" fill="#58c820" /><path d="M4 5h12" stroke="#aaa" /><path d="M6 8v5M9 8v5M9 10h6" stroke="#222" stroke-width="1.500" /><path d="M23 2l-8 14" stroke="#e0a020" stroke-width="3" /></svg></button>
        <button aria-label="Store"><svg width="24" height="24"><path d="M7 6V1h10v5" fill="none" stroke="#eee" stroke-width="1.500" /><path d="M1 6h22v17H1z" fill="#f4f4f4" /><path d="M8 10h4v4H8z" fill="#f25022" /><path d="M13 10h4v4h-4z" fill="#7fba00" /><path d="M8 15h4v4H8z" fill="#00a4ef" /><path d="M13 15h4v4h-4z" fill="#ffb900" /></svg></button>
        <button aria-label="OneNote"><svg width="24" height="24"><path d="M6 1h18v22H6z" fill="#c060e8" /><path d="M17 7h7v16h-7z" fill="#8a34c8" /><rect x="0" y="5" width="15" height="14" fill="#7719aa" /><text x="7" y="17" text-anchor="middle" class="ig">N</text></svg></button>
        <button aria-label="Skype"><svg width="24" height="24"><circle cx="12" cy="12" r="10" fill="#0aa0ec" /><circle cx="7" cy="7" r="6" fill="#0aa0ec" /><circle cx="17" cy="17" r="6" fill="#1890e0" /><text x="12" y="18" text-anchor="middle" class="ig sk">S</text></svg></button>
        <button aria-label="Opera"><svg width="24" height="24"><circle cx="12" cy="12" r="11" fill="#e81828" /><ellipse cx="12" cy="12" rx="5" ry="8" fill="#1a2a30" /></svg></button>
        <button aria-label="Edge"><svg width="26" height="26"><circle cx="13" cy="13" r="12" fill="#1878c8" /><path d="M1 12C3-1 24-2 25 12c0 5-8 6-9 3 3-7-10-10-15-3z" fill="#40c8a0" /><path d="M9 14c-1 8 8 9 14 6-5 7-19 6-17-4 1-2 2-3 3-2z" fill="#0c3c80" /></svg></button>
        <button class="run" aria-label="Chrome"><svg width="24" height="24"><circle cx="12" cy="12" r="11" fill="#f8c81c" /><path d="M12 12L2.500 6.500A11 11 0 0 1 21.500 6.500z" fill="#e04434" /><path d="M12 12L2.500 6.500A11 11 0 0 0 11 23z" fill="#28a050" /><circle cx="12" cy="12" r="5.500" fill="#fff" /><circle cx="12" cy="12" r="4.300" fill="#4088f0" /></svg></button>
        <button aria-label="Проводник"><svg width="24" height="24"><path d="M1 3h9l2 3h11v14H1z" fill="#f8d468" /><path d="M1 3h9v3H1z" fill="#e0a020" /><path d="M5 12h14v9h-4v-4H9v4H5z" fill="#3a90d8" /></svg></button>
        <button aria-label="Погода"><svg width="24" height="24"><circle cx="11" cy="12" r="10.500" fill="#ffb414" /><path d="M1 14a10 10 0 0 0 14 7z" fill="#f07c10" /><path d="M13 20a3 3 0 0 1 0-6 4 4 0 0 1 7-1 3.500 3.500 0 0 1 1 7z" fill="#f4f6fa" /></svg></button>
        <button class="run" aria-label="MetaTrader"><svg width="24" height="24"><circle cx="12" cy="6" r="4" fill="#a8d8a0" stroke="#2f7a2f" stroke-width="2" /><circle cx="6" cy="16" r="5" fill="#d8c030" /><circle cx="18" cy="16" r="5" fill="#3090d0" /><circle cx="12" cy="13" r="5" fill="#fff" stroke="#b8a080" /><text x="12" y="16" text-anchor="middle" class="coin">5</text></svg></button>
      </div>
      <div class="tray">
        <svg width="24" height="18"><rect x="4" y="1" width="16" height="16" rx="5" fill="#5aa81c" /><path d="M8 9l3 3 5-5" fill="none" stroke="#fff" stroke-width="2" /></svg>
        <svg width="24" height="18"><circle cx="10" cy="7" r="4.500" fill="#f8f020" stroke="#000" /><circle cx="16" cy="12" r="3.500" fill="#30c040" stroke="#000" /></svg>
        <svg width="24" height="40" class="lit"><path d="M12 12l6 6h-3v5H9v-5H6z" fill="#fff" /><path d="M7 22v4h9v-3" fill="none" stroke="#fff" stroke-width="2" /></svg>
        <svg width="24" height="18"><circle cx="11" cy="8" r="8" fill="#2ba0dc" /><path d="M5 8l9-3-2 7z" fill="#fff" /><rect x="9" y="7" width="12" height="11" rx="3" fill="#f04438" /><text x="15" y="16" text-anchor="middle" class="tb73">.3</text></svg>
        <span class="ru">Ru</span>
        <svg width="22" height="18" fill="none" stroke="#fff"><path d="M5 16A13 13 0 0 1 18 4M8 16a10 10 0 0 1 10-8M11 16a7 7 0 0 1 7-4.500M15 16a3 3 0 0 1 3-2" /></svg>
        <svg width="22" height="18" fill="none" stroke="#fff"><path d="M3 7h3l4-4v12l-4-4H3zM13 6a4 4 0 0 1 0 6M15.500 4a7 7 0 0 1 0 10M18 2a10 10 0 0 1 0 14" /></svg>
        <span class="lang">РУС</span>
        <span class="now2"><time>16:58</time><time>11.10.2021</time></span>
        <svg class="note" width="26" height="26"><path d="M1 2h16v13h-8l-4 4v-4H1z" fill="#fff" /><path d="M4 5.500h10M4 8.500h10M4 11.500h7" stroke="#1a2a30" /><circle cx="17" cy="17" r="7.500" fill="#3a474c" stroke="#8a9498" /><text x="17" y="21" text-anchor="middle" class="n3">3</text></svg>
      </div>
    </footer>
  </div>
</template>

<style>
body { margin: 0; }
</style>

<style scoped>
.app {
  position: relative; display: flex; flex-direction: column; min-height: 100vh; overflow: hidden;
  background: #f0f0f0; color: #000; font: 12px/16px "Noto Sans", "Open Sans", sans-serif;
}
* { box-sizing: border-box; }
button { font: inherit; color: inherit; background: none; border: 0; padding: 0; margin: 0; white-space: nowrap; }
a { color: inherit; text-decoration: none; }
h1, h2 { margin: 0; font: inherit; }
svg { flex: none; }
.wl { fill: none; stroke: #888; }
.cl { fill: none; stroke: #bbb; }
.tg { fill: none; stroke: #000; }
.k { fill: none; stroke: #222; stroke-width: 1.3; }
svg.b { fill: none; stroke: #0a5aa0; stroke-width: 1.2; }
svg.g { fill: none; stroke: #0da326; stroke-width: 1.2; }
.gr { stroke: #777; }
.coin { font: bold 8px "Liberation Sans", sans-serif; fill: #e07020; stroke: none; }

.titlebar { display: flex; align-items: center; height: 23px; background: #fff; color: #888; padding-left: 2px; }
.titlebar h1 { margin-left: 5px; flex: 1; }
.winbtns { display: flex; margin-right: 2px; }
.winbtns button { width: 46px; height: 20px; display: grid; place-items: center; }

.menubar { display: flex; height: 20px; padding-left: 1px; align-items: center; }
.menubar a { padding: 0 10px; }

.toolbar { display: flex; align-items: center; height: 31px; border-top: 1px solid #a0a0a0; border-bottom: 1px solid #d8d8d8; color: #0a5aa0; box-shadow: inset 0 1px #fff; }
.grip { width: 7px; height: 26px; background: radial-gradient(circle at 3px 2px, #999 1px, transparent 1px) 0 0 / 7px 4px; }
.sep { width: 6px; height: 28px; background: linear-gradient(#999, #999) 3px 0 / 1px 100% no-repeat; }
.sep + .grip { margin-left: -4px; }
.tb { width: 30px; height: 26px; margin: 0 1px; display: flex; align-items: center; justify-content: center; }
.tb.on { background: #c2ddf3; box-shadow: inset 0 0 0 1px #90c8f6; }
.tb.drop { width: 39px; }
.tb.wide { width: 108px; gap: 6px; color: #000; }
.tb.wide.on { width: 112px; }
.caret { border: 4px solid transparent; border-top: 5px solid #222; border-bottom: 0; margin-left: 3px; }
.dollar { font: bold 13px "Liberation Sans", sans-serif; fill: #c07800; }
.tbright { margin-left: auto; display: flex; align-items: center; gap: 14px; padding-right: 6px; }
.badge { font: bold 11px "Liberation Sans", sans-serif; fill: #fff; }
.lvl { font: bold 8px "Liberation Sans", sans-serif; fill: #0da326; stroke: none; }
.meter { width: 42px; height: 13px; border: 2px solid #888; background: #fff; margin-left: -4px; }
.meter i { display: block; width: 7px; height: 9px; background: #38d838; }

.mdi { flex: 1; display: grid; grid-template-columns: 1fr 1fr; border-top: 2px solid #696969; padding: 0 2px; }
.win { display: flex; flex-direction: column; border: 1px solid #696969; border-top: 0; padding: 0 5px 6px; min-width: 0; }
.win.first { margin-right: 1px; }
.win.second { padding-right: 6px; }
.wintitle { display: flex; align-items: center; height: 29px; color: #777; padding-left: 5px; gap: 4px; }
.cbtns { margin-left: auto; display: flex; padding-top: 3px; }
.cbtns button { width: 36px; display: grid; place-items: center; }
.chart { flex: 1; display: flex; flex-direction: column; background: #ccc; border: 1px solid #fff; border-top: 2px solid #808080; border-left: 2px solid #808080; font: 12px/16px "DejaVu Sans Condensed", "DejaVu Sans", sans-serif; }
.pane, .vol { position: relative; display: flex; flex: 1; min-height: 400px; }
.vol { flex: none; min-height: 0; height: 100px; border-top: 1px solid #000; }
.plot { flex: 1; width: 0; min-width: 0; height: auto; overflow: hidden; }
.axis { overflow: hidden; }
.strip { height: 21px; border-top: 1px solid #000; }
.times { display: flex; position: relative; height: 19px; border-top: 1px solid #000; }
.times ol { display: flex; margin: 0; padding: 0; list-style: none; flex: 1; line-height: 20px; }
.times li { width: 90px; text-align: center; }
.times .t1 { padding-left: 30px; }
.times .t2 { padding-left: 468px; }
.times time { font-size: 13px; line-height: 21px; padding-right: 10px; }
.range { position: absolute; top: 2px; height: 16px; border: 1px solid #000; }
.rg1 { left: 631px; width: 71px; }
.rg2 { left: 569px; width: 212px; }

.hb { fill: #dadada; stroke: #b0b0b0; }
.hbd { stroke: #b0b0b0; }
.tan { fill: #cdc0ae; stroke: #a08868; }
.n-g { fill: #004000; }
.n-r { fill: #5a1010; }
.side-buy { fill: #00d0d0; }
.side-sell { fill: #dc143c; }
.side-flat { fill: #000; }
.imb-r { fill: #ff3c3c; fill-opacity: .34; stroke: #c85050; }
.imb-g { fill: #008000; fill-opacity: .2; stroke: #008000; }
.clock { font-weight: bold; font-size: 11px; fill: #4a5666; }
.order rect { stroke: #000; }
.order .rim { fill: #ccc; stroke: #808080; }
.now { font-size: 14px; fill: #fff; }
.cross { fill: #f0f0f0; }

.ctools { position: absolute; left: 0; top: 2px; display: flex; align-items: center; height: 18px; gap: 3px; }
.ctools > button { width: 15px; height: 15px; border: 1px solid #000; font-size: 11px; line-height: 13px; text-align: center; overflow: hidden; display: grid; place-items: center; }
.ctools > button.dark { background: #808080; }
.ctools > button.cut { width: 6px; border-width: 0 0 0 1px; }
.period { padding-left: 3px; }
.p1 { width: 60px; }
.p2 { width: 68px; }
.r1 { left: 580px; }
.r2 { left: 658px; }
.sel { position: relative; width: 84px; height: 18px; border: 1px solid #000; margin-right: -2px; }
.sel::after { content: ""; position: absolute; right: 3px; top: 5px; border: 5px solid transparent; border-top: 8px solid #000; border-bottom: 0; }
.sel select { appearance: none; width: 100%; height: 16px; border: 0; background: none; font: inherit; padding: 0 2px; }
.ctools :deep(.spin) { width: 41px; height: 18px; background: none; border-color: #000; padding: 0; }
.ctools :deep(.spin input) { font-size: 12px; padding-bottom: 0; }
.ctools :deep(.steps button) { background: none; border: 0; border-left: 1px solid #000; }
.ctools :deep(.steps button + button) { border-top: 1px solid #000; }

.charttabs { display: flex; height: 21px; margin-top: 2px; border-top: 1px solid #000; padding-left: 4px; color: #888; border-bottom: 1px solid #fff; }
.charttabs button { padding: 0 11px; }
.charttabs .on { background: #fff; color: #000; border: solid #000; border-width: 0 1px 1px; padding: 0 9px; }
.arrows { margin-left: auto; display: flex; gap: 16px; align-items: center; padding-right: 12px; }
.arrows i { border: 4px solid transparent; border-right: 4px solid #aaa; border-left: 0; }
.arrows .nx { border-left: 4px solid #aaa; border-right: 0; }

.toolbox { display: flex; margin-top: 3px; }
.side { width: 15px; display: flex; flex-direction: column; align-items: center; }
.side button { height: 14px; font: bold 11px/12px "DejaVu Sans", sans-serif; }
.side span { flex: 1; width: 14px; background: linear-gradient(#b8cce4, #d8e6f4); writing-mode: vertical-rl; transform: rotate(180deg); font: 11px/14px "DejaVu Sans", sans-serif; text-align: left; padding-top: 2px; }
.tbx { flex: 1; min-width: 0; padding-right: 4px; }
table { width: 100%; border-collapse: collapse; table-layout: fixed; background: #fff; border-top: 1px solid #999; font-size: 11px; }
.k1 { width: 229px; } .k2 { width: 158px; } .k3 { width: 139px; } .k4 { width: 175px; } .k5 { width: 176px; } .k6 { width: 349px; } .k7 { width: 350px; }
th { font-weight: normal; text-align: left; height: 25px; padding: 0 7px; border-right: 1px solid #ddd; font-size: 12px; }
td { height: 20px; padding: 0 3px; border-right: 1px solid #ccc; white-space: nowrap; line-height: 16px; }
td svg { vertical-align: middle; margin-right: 6px; }
td:first-child { padding-left: 4px; }
.r { text-align: right; }
tbody tr:last-child { border-bottom: 1px solid #bbb; }
.bal td { background: #c8c8c8; border: 0; font-weight: bold; height: 21px; }
.bal .dotm { margin: 0 6px 0 4px; }
.bal svg { margin: 0 0 0 2px; }
.x { color: #999; margin: 0 2px 0 4px; font-size: 10px; }
.lime { background: #62f062; }
.doc { fill: none; } .red { stroke: #d82020; } .blu { stroke: #0a5aa0; }
.tabs { display: flex; height: 23px; border-top: 1px solid #000; color: #777; align-items: center; box-shadow: 0 -8px #fff; margin-top: 8px; }
.tabs button { padding: 0 9px; border-right: 1px solid #888; height: 16px; }
.tabs button.on { background: #fff; color: #000; border: solid #000; border-width: 0 1px 1px; height: 20px; align-self: flex-start; margin-left: 2px; }
.tabs button:last-of-type { border: 0; }
sub { color: #f00; font-size: 9px; line-height: 8px; }
.links { margin-left: auto; display: flex; gap: 9px; color: #000; padding-right: 9px; }
.links a { display: flex; align-items: center; gap: 4px; }

.status { display: flex; height: 24px; margin-top: 3px; border-top: 1px solid #aaa; align-items: center; }
.help { padding-left: 2px; flex: 1; }
.c1 { width: 70px; height: 18px; border-left: 1px solid #999; }
.net { width: 121px; height: 18px; border-left: 1px solid #999; display: flex; align-items: center; gap: 7px; padding-left: 5px; }

/* order panel */
.dialog { position: absolute; left: 966px; top: 674px; width: 451px; background: #f0f0f0; border: 1px solid #999; box-shadow: 3px 3px 8px rgba(0, 0, 0, .4); font: 10px/13px "DejaVu Sans Condensed", "DejaVu Sans", sans-serif; }
.dtitle { display: flex; align-items: center; justify-content: space-between; height: 30px; background: #fff; color: #888; padding: 0 9px 0 7px; font: 12px/16px "Noto Sans", sans-serif; }
.dbody { padding: 5px 4px 8px; }
.dtop { display: flex; gap: 6px; }
.dleft { width: 222px; }
.dright { width: 212px; }
.btnzone { display: flex; gap: 12px; }
.two { width: 145px; }
.pair { display: flex; justify-content: space-between; }
.colA { display: flex; flex-direction: column; gap: 15px; }
.colB { display: flex; flex-direction: column; gap: 10px; }
.dialog .btnzone button { height: 20px; width: 50px; border: 1px solid #444; background: #d2d2d2; font-size: 12px; line-height: 16px; }
.dialog .btnzone .colC button { width: 65px; }
.dialog .btnzone .o { background: #ff7f50; border-color: #6a2a10; }
.dialog .btnzone .bl { background: #1e90ff; border-color: #104070; }
.dialog .btnzone .big { width: 84px; height: 35px; font-size: 10px; line-height: 13px; }
.dialog .btnzone .close { height: 24px; background: #f00; border-color: #800; font-weight: bold; font-size: 11px; }
.dialog .btnzone .tall { height: 24px; }
.volrow { display: flex; justify-content: space-between; margin-top: 9px; height: 20px; padding-left: 1px; align-items: center; }
.dialog label { display: flex; align-items: center; gap: 5px; white-space: nowrap; }
.dialog span { white-space: nowrap; }
.line { display: flex; align-items: center; height: 20px; }
.sl { margin-top: 10px; }
.h13 { height: 13px; }
.l42 { width: 42px; } .l44 { width: 44px; margin-left: 6px; }
.w57 { width: 57px; } .w65 { width: 65px; } .w42 { width: 42px; } .w47 { width: 47px; } .w58 { width: 58px; }
.ml8 { margin-left: 8px; } .ml3 { margin-left: 3px; }
.l117 { width: 117px; } .l103 { width: 103px; padding-left: 2px; }
.l73 { width: 73px; } .l141 { width: 141px; }
fieldset { margin: 0; padding: 0 0 0 5px; border: 1px solid #dcdcdc; min-width: 0; }
legend { padding: 0 3px; height: 14px; line-height: 14px; font-size: 11px; }
.limit { height: 122px; }
.limit > .h13 { margin-top: 3px; }
.a { margin-top: 4px; }
.b2 { margin-top: 2px; }
.tp { margin: 7px 0 0 9px; }
.trail { margin-top: 7px; padding-left: 1px; }
.trail b { width: 67px; color: #006400; font-size: 11px; }
.l43 { width: 43px; } .l58 { width: 58px; padding-left: 17px; } .l72 { width: 72px; padding-left: 15px; }
.dgroups { display: flex; gap: 6px; margin-top: 8px; }
.delta { width: 222px; height: 118px; padding-left: 6px; }
.imb { width: 212px; height: 118px; padding-left: 7px; }
.s1 { height: 16px; margin-top: 5px; } .s2 { margin-top: 6px; } .s3 { height: 13px; margin-top: 7px; } .s4 { margin-top: 6px; }
.enable { color: #006400; font-weight: bold; font-size: 14px; line-height: 16px; }
.combo { margin-top: 9px; }
.dialog input[type="checkbox"], .dialog input[type="radio"] { appearance: none; flex: none; width: 13px; height: 13px; margin: 0; border: 1px solid #333; background: #fff; display: grid; place-items: center; }
.dialog input[type="radio"] { border-radius: 50%; }
.dialog input[type="checkbox"]:checked::after { content: ""; width: 7px; height: 3px; border: solid #333; border-width: 0 0 1px 1px; transform: rotate(-45deg); margin-bottom: 3px; }
.dialog input[type="radio"]:checked::after { content: ""; width: 7px; height: 7px; border-radius: 50%; background: #333; }
:deep(.spin), .spin { display: flex; flex: none; height: 20px; background: #fff; border: 1px solid #a8a8a8; padding: 1px; }
:deep(.spin input) { flex: 1; width: 0; min-width: 0; border: 0; padding: 0 0 3px 1px; margin: 0; background: none; font: 11px/13px "DejaVu Sans Condensed", sans-serif; }
:deep(.steps) { display: flex; flex-direction: column; width: 14px; }
:deep(.steps button) { flex: 1; padding: 0; margin: 0; border: 1px solid #b0b0b0; background: #ececec; display: grid; place-items: center; }
:deep(.steps i) { border: 3px solid transparent; }
:deep(.steps .up) { border-bottom: 3px solid #000; border-top: 0; }
:deep(.steps .down) { border-top: 3px solid #000; border-bottom: 0; }

.taskbar { display: flex; height: 40px; background: #1a2a30; color: #fff; }
.start { width: 48px; display: grid; place-items: center; }
.search { width: 344px; background: #f0f0f0; border: 1px solid #ccc; display: flex; align-items: center; padding-left: 11px; gap: 10px; }
.search input { flex: 1; border: 0; background: none; font: 14px/20px "Noto Sans", sans-serif; padding: 0; min-width: 0; }
.search input::placeholder { color: #333; opacity: 1; }
.apps { display: flex; margin-left: 3px; gap: 1px; }
.apps button { width: 48px; display: grid; place-items: center; }
.apps .run { background: linear-gradient(#a8eafa, #a8eafa) 50% 100% / 40px 2px no-repeat; }
.apps .hot { background: #a5622e; border-bottom: 2px solid #ff6a00; }
.alp { font: 9px "DejaVu Sans", sans-serif; fill: #000; }
.tb73 { font: 10px "Liberation Sans", sans-serif; fill: #fff; }
.ig { font: bold 12px "Liberation Sans", sans-serif; fill: #fff; }
.sk { font-size: 16px; }
.tray { margin-left: auto; display: flex; align-items: center; padding-right: 5px; }
.tray .lit { background: #323f45; }
.ru { background: #000080; font: 12px/16px "DejaVu Sans", sans-serif; width: 16px; margin: 0 5px 0 6px; text-align: center; }
.lang { margin-left: 9px; width: 30px; }
.now2 { display: flex; flex-direction: column; width: 62px; text-align: center; line-height: 18px; }
.note { margin: 4px 0 0 14px; width: 38px; }
.n3 { font: bold 11px "Liberation Sans", sans-serif; fill: #fff; }
</style>
